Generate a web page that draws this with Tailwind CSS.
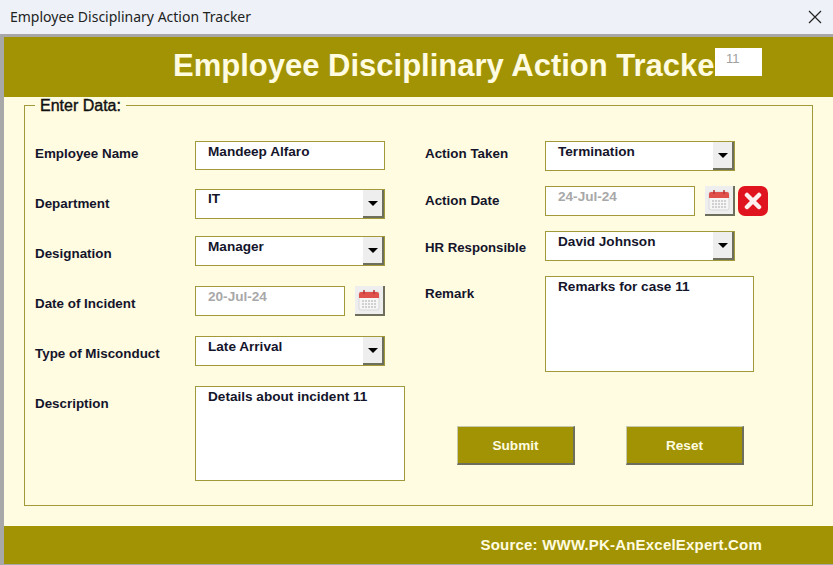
<!DOCTYPE html>
<html lang="en">
<head>
  <meta charset="UTF-8">
  <title>Employee Disciplinary Action Tracker</title>
  <script src="https://cdn.jsdelivr.net/npm/@tailwindcss/browser@4"></script>
</head>
<body class="w-[833px] h-[565px] overflow-hidden bg-[#a8a8a8] font-['Liberation_Sans',Arial,sans-serif] text-[13.6px] leading-[20px] font-bold text-[#14142b]">
  <!-- title bar -->
  <div class="h-[34px] bg-[#eef2f8] flex items-center justify-between pl-[10px] pr-[11px]">
    <span class="font-['Noto_Sans',sans-serif] font-normal text-[14px] text-[#222]">Employee Disciplinary Action Tracker</span>
    <svg width="14" height="14" viewBox="0 0 14 14" fill="none" stroke="#222" stroke-width="1.2"><path d="M1 1l12 12M13 1L1 13"/></svg>
  </div>

  <div class="mt-[3px] ml-[4px] h-[527px] bg-[#fffce1] flex flex-col">
    <!-- header -->
    <div class="relative h-[60px] shrink-0 bg-[#a29305] pl-[169px] overflow-hidden">
      <h1 class="text-[31px] leading-[58px] font-bold text-[#fffce1] whitespace-nowrap">Employee Disciplinary Action Tracker</h1>
      <div class="absolute left-[711px] top-[11px] w-[47px] h-[28px] bg-white pl-[11px] pt-[3px] text-[13px] leading-[15px] font-normal text-[#a0a0a0]">11</div>
    </div>

    <!-- panel -->
    <div class="relative mx-[20px] mt-[8px] w-[789px] h-[401px] border border-[#a29a3a] flex shrink-0">
      <div class="absolute left-[10px] -top-[9px] bg-[#fffce1] px-[5px] text-[16px] leading-[17px] font-normal text-[#111] [-webkit-text-stroke:0.4px_#111]">Enter Data:</div>

      <!-- left column -->
      <div class="w-[400px] pl-[10px] pt-[35px] flex flex-col">
        <div class="flex h-[29px]">
          <label class="w-[160px] pt-[3px] text-[13.4px]">Employee Name</label>
          <div class="w-[190px] h-[29px] border border-[#a29a3a] bg-white pl-[12px] pt-0">Mandeep Alfaro</div>
        </div>
        <div class="flex h-[30px] mt-[19px]">
          <label class="w-[160px] pt-[5px] text-[13.4px]">Department</label>
          <div class="w-[190px] h-[30px] border border-[#a29a3a] bg-white pl-[12px] flex justify-between">
            <span class="-mt-[1px]">IT</span>
            <div class="w-[21px] h-[28px] bg-[#eeeeee] border-r-2 border-b-2 border-[#6e6e5c] flex items-center justify-center"><div class="w-0 h-0 border-x-[5px] border-x-transparent border-t-[5px] border-t-black"></div></div>
          </div>
        </div>
        <div class="flex h-[30px] mt-[17px]">
          <label class="w-[160px] pt-[8px] text-[13.4px]">Designation</label>
          <div class="w-[190px] h-[30px] border border-[#a29a3a] bg-white pl-[12px] flex justify-between">
            <span>Manager</span>
            <div class="w-[21px] h-[28px] bg-[#eeeeee] border-r-2 border-b-2 border-[#6e6e5c] flex items-center justify-center"><div class="w-0 h-0 border-x-[5px] border-x-transparent border-t-[5px] border-t-black"></div></div>
          </div>
        </div>
        <div class="flex h-[30px] mt-[20px]">
          <label class="w-[160px] pt-[8px] text-[13.4px]">Date of Incident</label>
          <div class="w-[150px] h-[30px] border border-[#a29a3a] bg-white pl-[12px] text-[#a8a8a8]">20-Jul-24</div>
          <button class="ml-[10px] w-[30px] h-[30px] bg-[#eeeeee] border-r-2 border-b-2 border-[#6e6e5c] flex items-center justify-center">
            <svg width="22" height="22" viewBox="0 0 22 22"><rect x="1" y="3" width="20" height="18" rx="2" fill="#f6f6f6" stroke="#d8d8d8"/><path d="M1 9V5a2 2 0 0 1 2-2h16a2 2 0 0 1 2 2v4z" fill="#e0504a"/><path d="M6 1v4M16 1v4" stroke="#b33" stroke-width="1.5"/><path d="M4 12h14M4 15h14M4 18h14" stroke="#c4c4c4" stroke-width="1.6" stroke-dasharray="2 1"/></svg>
          </button>
        </div>
        <div class="flex h-[30px] mt-[20px]">
          <label class="w-[160px] pt-[8px] text-[13.4px]">Type of Misconduct</label>
          <div class="w-[190px] h-[30px] border border-[#a29a3a] bg-white pl-[12px] flex justify-between">
            <span>Late Arrival</span>
            <div class="w-[21px] h-[28px] bg-[#eeeeee] border-r-2 border-b-2 border-[#6e6e5c] flex items-center justify-center"><div class="w-0 h-0 border-x-[5px] border-x-transparent border-t-[5px] border-t-black"></div></div>
          </div>
        </div>
        <div class="flex mt-[20px]">
          <label class="w-[160px] pt-[8px] text-[13.4px]">Description</label>
          <div class="w-[210px] h-[95px] border border-[#a29a3a] bg-white pl-[12px]">Details about incident 11</div>
        </div>
      </div>

      <!-- right column -->
      <div class="flex-1 pt-[35px] flex flex-col">
        <div class="flex h-[30px]">
          <label class="w-[120px] pt-[3px] text-[13.4px]">Action Taken</label>
          <div class="w-[190px] h-[30px] border border-[#a29a3a] bg-white pl-[12px] flex justify-between">
            <span>Termination</span>
            <div class="w-[21px] h-[28px] bg-[#eeeeee] border-r-2 border-b-2 border-[#6e6e5c] flex items-center justify-center"><div class="w-0 h-0 border-x-[5px] border-x-transparent border-t-[5px] border-t-black"></div></div>
          </div>
        </div>
        <div class="flex h-[30px] mt-[15px]">
          <label class="w-[120px] pt-[5px] text-[13.4px]">Action Date</label>
          <div class="w-[150px] h-[30px] border border-[#a29a3a] bg-white pl-[12px] text-[#a8a8a8]">24-Jul-24</div>
          <button class="ml-[10px] w-[30px] h-[30px] bg-[#eeeeee] border-r-2 border-b-2 border-[#6e6e5c] flex items-center justify-center">
            <svg width="22" height="22" viewBox="0 0 22 22"><rect x="1" y="3" width="20" height="18" rx="2" fill="#f6f6f6" stroke="#d8d8d8"/><path d="M1 9V5a2 2 0 0 1 2-2h16a2 2 0 0 1 2 2v4z" fill="#e0504a"/><path d="M6 1v4M16 1v4" stroke="#b33" stroke-width="1.5"/><path d="M4 12h14M4 15h14M4 18h14" stroke="#c4c4c4" stroke-width="1.6" stroke-dasharray="2 1"/></svg>
          </button>
          <button class="ml-[3px] w-[30px] h-[30px] rounded-[7px] bg-[#e0141e] flex items-center justify-center">
            <svg width="18" height="18" viewBox="0 0 18 18" stroke="#fff0f0" stroke-width="4.5" stroke-linecap="round"><path d="M3 3l12 12M15 3L3 15"/></svg>
          </button>
        </div>
        <div class="flex h-[30px] mt-[15px]">
          <label class="w-[120px] pt-[7px] text-[13.2px]">HR Responsible</label>
          <div class="w-[190px] h-[30px] border border-[#a29a3a] bg-white pl-[12px] flex justify-between">
            <span>David Johnson</span>
            <div class="w-[21px] h-[28px] bg-[#eeeeee] border-r-2 border-b-2 border-[#6e6e5c] flex items-center justify-center"><div class="w-0 h-0 border-x-[5px] border-x-transparent border-t-[5px] border-t-black"></div></div>
          </div>
        </div>
        <div class="flex mt-[15px]">
          <label class="w-[120px] pt-[8px] text-[13.4px]">Remark</label>
          <div class="w-[209px] h-[96px] border border-[#a29a3a] bg-white pl-[12px]">Remarks for case 11</div>
        </div>
        <div class="flex mt-[54px] ml-[32px] gap-[51px]">
          <button class="w-[118px] h-[39px] pt-[2px] bg-[#a29305] border-t border-l border-t-[#c8c8b0] border-l-[#c8c8b0] border-r-2 border-r-[#6e6e5c] border-b-2 border-b-[#6e6e5c] text-[#fffce1] font-bold text-[13.6px]">Submit</button>
          <button class="w-[118px] h-[39px] pt-[2px] bg-[#a29305] border-t border-l border-t-[#c8c8b0] border-l-[#c8c8b0] border-r-2 border-r-[#6e6e5c] border-b-2 border-b-[#6e6e5c] text-[#fffce1] font-bold text-[13.6px]">Reset</button>
        </div>
      </div>
    </div>

    <!-- footer -->
    <div class="mt-[20px] h-[38px] bg-[#a29305] flex items-center justify-end pr-[71px] text-[15px] tracking-[0.2px] text-[#fffce1]">Source: WWW.PK-AnExcelExpert.Com</div>
  </div>
</body>
</html>
